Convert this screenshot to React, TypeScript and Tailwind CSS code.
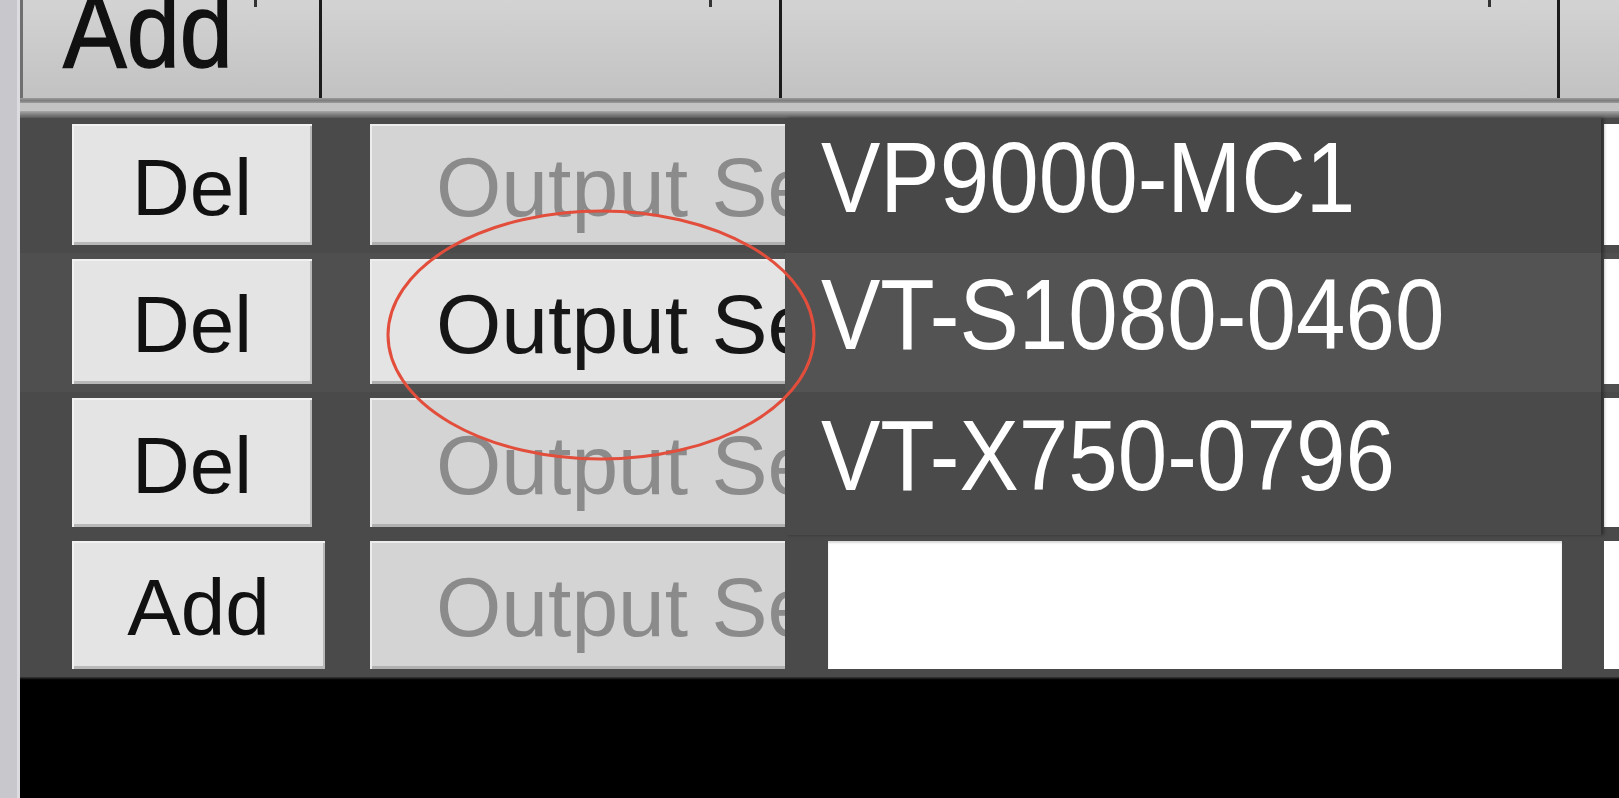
import React from 'react';

type Row = {
  label: string;
  active: boolean;
  height: string;
  bg: string;
  btnWidth: string;
};

const rows: Row[] = [
  { label: 'Del', active: false, height: 'h-[135px]', bg: 'bg-[#4a4a4a]', btnWidth: 'w-[240px]' },
  { label: 'Del', active: true, height: 'h-[139px]', bg: 'bg-[#4f4f4f]', btnWidth: 'w-[240px]' },
  { label: 'Del', active: false, height: 'h-[143px]', bg: 'bg-[#4a4a4a]', btnWidth: 'w-[240px]' },
  { label: 'Add', active: false, height: 'h-[142px]', bg: 'bg-[#4a4a4a]', btnWidth: 'w-[253px]' },
];

const options = [
  { name: 'VP9000-MC1', height: 'h-[135px]', bg: 'bg-[#484848]' },
  { name: 'VT-S1080-0460', height: 'h-[139px]', bg: 'bg-[#535353]' },
  { name: 'VT-X750-0796', height: 'h-[143px]', bg: 'bg-[#4a4a4a]' },
];

function Header() {
  return (
    <>
      <div className="flex h-[98px] shrink-0 overflow-hidden bg-gradient-to-b from-[#d3d3d3] to-[#c2c2c2]">
        <div className="flex w-[302px] shrink-0 items-start border-l-[3px] border-r-[3px] border-l-[#6f6f6f] border-r-[#1c1c1c] pl-[40px]">
          <span className="-mt-[23px] inline-block origin-left scale-x-[0.9] text-[106px] leading-none text-[#111] [-webkit-text-stroke:1.5px_#111]">
            Add
          </span>
          <span className="ml-[2px] h-[7px] w-[3px] bg-[#333]" />
        </div>
        <div className="flex w-[460px] shrink-0 items-start justify-end border-r-[3px] border-[#1c1c1c] pr-[67px]">
          <span className="h-[7px] w-[3px] bg-[#333]" />
        </div>
        <div className="flex w-[778px] shrink-0 items-start justify-end border-r-[3px] border-[#1c1c1c] pr-[66px]">
          <span className="h-[7px] w-[3px] bg-[#333]" />
        </div>
        <div className="flex-1" />
      </div>
      <div className="h-[5px] shrink-0 bg-gradient-to-b from-[#9a9a9a] via-[#7e7e7e] to-[#9a9a9a]" />
      <div className="h-[8px] shrink-0 bg-[#c3c3c3]" />
      <div className="h-[7px] shrink-0 bg-gradient-to-b from-[#a8a8a8] to-[#5a5a5a]" />
    </>
  );
}

function TableRow({ row }: { row: Row }) {
  return (
    <div className={`flex shrink-0 pt-[6px] pb-[8px] ${row.height} ${row.bg}`}>
      <div className="w-[52px] shrink-0" />
      <div className="w-[298px] shrink-0">
        <button
          className={`flex h-full items-center justify-center bg-[#e4e4e4] pt-[6px] text-[80px] leading-none text-[#111] shadow-[inset_2px_2px_0_#f1f1f1,inset_-2px_-3px_0_#b8b8b8] ${row.btnWidth}`}
        >
          {row.label}
        </button>
      </div>
      <div className="w-[415px] shrink-0">
        <button
          className={`flex h-full w-full items-center overflow-hidden whitespace-nowrap pl-[66px] pt-[4px] text-[84px] leading-none shadow-[inset_2px_2px_0_#ececec,inset_0_-3px_0_#b0b0b0] ${
            row.active ? 'bg-[#e4e4e4] text-[#161616]' : 'bg-[#d4d4d4] text-[#8b8b8b]'
          }`}
        >
          Output Settings
        </button>
      </div>
      <div className="w-[816px] shrink-0 pl-[43px]">
        <div className="h-full w-[734px] bg-white shadow-[inset_0_2px_2px_rgba(0,0,0,0.15)]" />
      </div>
      <div className="flex-1 pl-[3px]">
        <div className="h-full bg-white" />
      </div>
    </div>
  );
}

export default function App() {
  return (
    <div className="relative flex h-[798px] w-[1619px] overflow-hidden bg-black font-['Liberation_Sans',Arial,sans-serif]">
      <div className="w-[20px] shrink-0 border-r-[3px] border-[#dcdce0] bg-[#c8c8cc]" />
      <div className="flex min-w-0 flex-1 flex-col">
        <Header />
        <div className="relative flex shrink-0 flex-col">
          {rows.map((row, i) => (
            <TableRow key={i} row={row} />
          ))}
          {/* open dropdown list */}
          <div className="absolute left-[765px] top-0 flex w-[816px] flex-col shadow-[3px_0_3px_rgba(0,0,0,0.35)]">
            {options.map((opt) => (
              <div key={opt.name} className={`flex items-center pb-[18px] pl-[36px] ${opt.height} ${opt.bg}`}>
                <span className="inline-block origin-left scale-x-[0.89] whitespace-nowrap text-[100px] leading-none text-white">
                  {opt.name}
                </span>
              </div>
            ))}
          </div>
        </div>
        <div className="h-[4px] shrink-0 bg-gradient-to-b from-[#3a3a3a] to-black" />
        <div className="flex-1 bg-black" />
      </div>
      <svg
        className="pointer-events-none absolute left-[386px] top-[208px] h-[254px] w-[430px]"
        viewBox="0 0 430 254"
      >
        <ellipse cx="215" cy="127" rx="213" ry="124" fill="none" stroke="#e24e3b" strokeWidth="3" />
      </svg>
    </div>
  );
}
